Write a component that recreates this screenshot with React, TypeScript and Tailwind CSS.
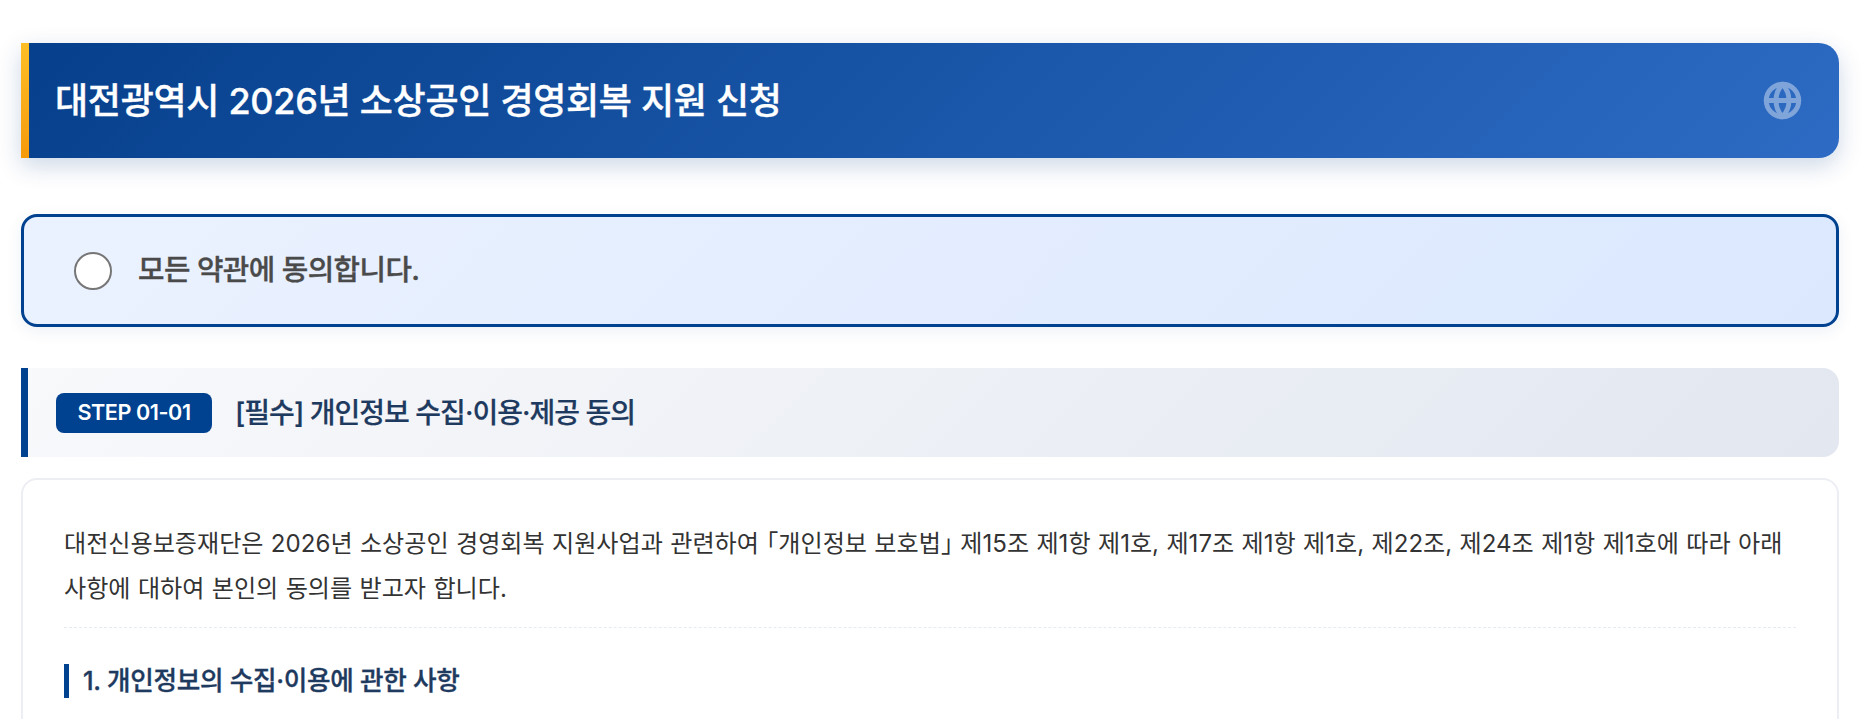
import { Globe } from 'lucide-react';

const font = { fontFamily: 'Inter, "Noto Sans CJK KR", sans-serif' };

export default function App() {
  return (
    <div style={font} className="h-screen overflow-hidden bg-white pl-[21px] pr-[23px] pt-[43px]">
      {/* Page header */}
      <header className="flex h-[115px] items-center rounded-r-[20px] bg-[linear-gradient(135deg,#06408c,#2d6bc4)] pr-[37px] shadow-[0_8px_24px_rgba(0,61,130,0.2)]">
        <span className="h-full w-[8px] bg-gradient-to-b from-[#fdbf25] to-[#f59a0b]" />
        <h1 className="ml-[26px] flex-1 text-[36px] font-medium tracking-[-0.008em] text-white [-webkit-text-stroke:0.35px]">대전광역시 2026년 소상공인 경영회복 지원 신청</h1>
        <Globe size={39} strokeWidth={3} className="text-white opacity-40" />
      </header>

      {/* Agree all */}
      <label className="mt-[56px] flex h-[113px] items-center gap-[26px] rounded-2xl border-[3px] border-[#004190] bg-[linear-gradient(135deg,#ebf2ff,#dbe8fe)] pl-[50px] shadow-[0_4px_16px_rgba(0,61,130,0.08)]">
        <span className="h-[38px] w-[38px] rounded-full border-2 border-[#767676] bg-white" />
        <span className="relative -top-px text-[28.8px] font-medium tracking-[-0.02em] text-[#4a4a4a] [-webkit-text-stroke:0.35px]">모든 약관에 동의합니다.</span>
      </label>

      {/* Step title */}
      <div className="mt-[41px] flex h-[89px] items-center gap-[23px] rounded-r-2xl border-l-[7px] border-l-[#004190] bg-[linear-gradient(135deg,#f8f9fb,#e2e7f0)] pl-[28px]">
        <span className="flex h-[40px] w-[156px] items-center justify-center rounded-lg bg-[#004190] text-[21.6px] font-semibold tracking-[-0.02em] text-white">STEP 01-01</span>
        <h2 className="text-[28px] font-medium tracking-[-0.035em] text-[#1e3a5f] [-webkit-text-stroke:0.2px]">[필수] 개인정보 수집·이용·제공 동의</h2>
      </div>

      {/* Terms body */}
      <section className="mt-[21px] rounded-2xl border-2 border-[#eceef3] bg-white px-[41px] pt-[41px] pb-[40px]">
        <p className="border-b border-dashed border-[#e6ebf2] pb-[16px] text-[24.1px] leading-[45px] text-[#333] [word-spacing:0.6px]">
          대전신용보증재단은 2026년 소상공인 경영회복 지원사업과 관련하여 <span className="[font-feature-settings:'halt']">「</span>개인정보 보호법<span className="[font-feature-settings:'halt']">」</span> 제15조 제1항 제1호, 제17조 제1항 제1호, 제22조, 제24조 제1항 제1호에 따라 아래
          <br />
          사항에 대하여 본인의 동의를 받고자 합니다.
        </p>
        <h3 className="mt-[36px] border-l-[5px] border-l-[#004190] pl-[14px] text-[25.6px] font-medium leading-[34px] tracking-[-0.012em] text-[#1e3a5f] [-webkit-text-stroke:0.35px]">1. 개인정보의 수집·이용에 관한 사항</h3>
      </section>
    </div>
  );
}
